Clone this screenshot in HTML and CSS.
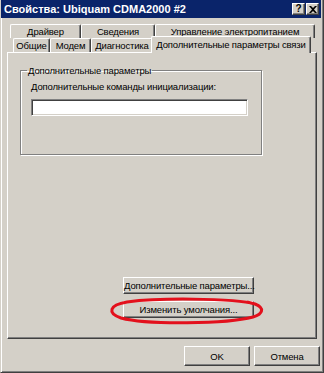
FILE: index.html
```html
<!DOCTYPE html>
<html lang="ru">
<head>
<meta charset="UTF-8">
<title>Свойства: Ubiquam CDMA2000 #2</title>
<link rel="stylesheet" href="styles.css">
</head>
<body>
<div class="window">
    <div class="titlebar">
        <span class="title">Свойства: Ubiquam CDMA2000 #2</span>
        <div class="caption-btns">
            <span class="cap-btn help">?</span>
            <span class="cap-btn close">
                <svg width="8" height="7" viewBox="0 0 8 7"><path d="M0 0h2l2 2 2-2h2L5 3.5 8 7H6L4 5 2 7H0l3-3.5z" fill="#000"/></svg>
            </span>
        </div>
    </div>

    <div class="tabs">
        <div class="tab-row back">
            <div class="tab w-driver">Драйвер</div>
            <div class="tab w-info">Сведения</div>
            <div class="tab w-power">Управление электропитанием</div>
        </div>
        <div class="tab-row front">
            <div class="tab w-general">Общие</div>
            <div class="tab w-modem">Модем</div>
            <div class="tab w-diag">Диагностика</div>
            <div class="tab active w-extra">Дополнительные параметры связи</div>
        </div>
    </div>

    <div class="panel">
        <fieldset class="group">
            <legend>Дополнительные параметры</legend>
            <label for="initcmd">Дополнительные команды инициализации:</label>
            <input type="text" id="initcmd" class="textbox">
        </fieldset>

        <div class="panel-buttons">
            <button class="btn wide">Дополнительные параметры...</button>
            <button class="btn wide">Изменить умолчания...</button>
        </div>

        <!-- red marker round the second button -->
        <svg class="mark" width="160" height="30" viewBox="0 0 160 30">
            <path d="M150 9 C 140 3, 60 1, 20 6 C 2 9, 0 17, 14 22 C 40 29, 120 28, 146 21 C 156 18, 158 12, 148 8 L 140 6" fill="none" stroke="#e3101c" stroke-width="3"/>
        </svg>
    </div>

    <div class="dialog-buttons">
        <button class="btn ok">OK</button>
        <button class="btn cancel">Отмена</button>
    </div>
</div>
</body>
</html>
```

FILE: styles.css
```css
body {
    margin: 0;
    padding: 0;
    background: #d4d0c8;
    font-family: "Liberation Sans", Arial, sans-serif;
    font-size: 9.5px;
    letter-spacing: -0.15px;
    color: #000;
}

.window {
    width: 324px;
    height: 373px;
    box-sizing: border-box;
    background: #d4d0c8;
    border-left: 1px solid #d4d0c8;
    border-right: 1px solid #404040;
    border-bottom: 1px solid #404040;
    box-shadow: inset 1px 0 #fff, inset -1px -1px #808080;
    padding: 0 2px 0 0;
    position: relative;
}

.titlebar {
    height: 18px;
    background: #0a246a;
    display: flex;
    align-items: center;
    justify-content: space-between;
    padding: 0 2px 0 3px;
}

.title {
    color: #fff;
    font-weight: bold;
    font-size: 11px;
    letter-spacing: 0;
}

.caption-btns {
    display: flex;
    gap: 1px;
}

.cap-btn {
    width: 13px;
    height: 12px;
    box-sizing: border-box;
    background: #d4d0c8;
    border: 1px solid;
    border-color: #fff #404040 #404040 #fff;
    box-shadow: inset -1px -1px #808080;
    display: flex;
    align-items: center;
    justify-content: center;
    font-weight: bold;
    font-size: 10px;
    line-height: 1;
}

.tabs {
    margin-top: 6px;
}

.tab-row {
    display: flex;
    height: 14px;
}

.tab-row.back {
    margin-left: 9px;
}

.tab-row.front {
    margin-left: 12px;
}

.tab {
    box-sizing: border-box;
    height: 14px;
    border-top: 1px solid #fff;
    border-left: 1px solid #fff;
    border-right: 1px solid #404040;
    box-shadow: inset -1px 0 #808080;
    border-radius: 2px 2px 0 0;
    text-align: center;
    line-height: 13px;
    white-space: nowrap;
}

.tab.active {
    height: 17px;
    margin-top: -2px;
    margin-left: -2px;
    background: #d4d0c8;
    line-height: 15px;
    position: relative;
    z-index: 1;
}

.w-driver { width: 71px; }
.w-info { width: 74px; }
.w-power { width: 160px; }
.w-general { width: 37px; }
.w-modem { width: 41px; }
.w-diag { width: 62px; }
.w-extra { width: 160px; }

.panel {
    margin-left: 6px;
    width: 310px;
    height: 287px;
    box-sizing: border-box;
    border: 1px solid;
    border-color: #fff #404040 #404040 #fff;
    box-shadow: inset -1px -1px #808080;
    position: relative;
    padding: 0 0 0 12px;
}

.group {
    margin: 12px 0 0 0;
    width: 242px;
    height: 90px;
    box-sizing: border-box;
    padding: 5px 0 0 10px;
    border: 1px solid #808080;
    box-shadow: 1px 1px #fff, inset 1px 1px #fff;
}

.group legend {
    padding: 0 1px;
    margin-left: -4px;
    line-height: 11px;
}

.group label {
    display: block;
    line-height: 12px;
    margin-bottom: 6px;
}

.textbox {
    width: 217px;
    height: 17px;
    box-sizing: border-box;
    border: 1px solid;
    border-color: #808080 #fff #fff #808080;
    box-shadow: inset 1px 1px #404040, inset -1px -1px #d4d0c8;
    background: #fff;
    padding: 0;
    margin: 0;
}

.btn {
    box-sizing: border-box;
    background: #d4d0c8;
    border: 1px solid;
    border-color: #fff #404040 #404040 #fff;
    box-shadow: inset -1px -1px #808080;
    font-family: inherit;
    font-size: 9.5px;
    letter-spacing: -0.15px;
    color: #000;
    padding: 0;
    white-space: nowrap;
}

.panel-buttons {
    margin: 122px 0 0 103px;
    display: flex;
    flex-direction: column;
    gap: 7px;
}

.btn.wide {
    width: 131px;
    height: 17px;
}

.mark {
    position: absolute;
    left: 99px;
    top: 243px;
}

.dialog-buttons {
    display: flex;
    justify-content: flex-end;
    gap: 4px;
    margin-top: 7px;
    padding-right: 1px;
}

.btn.ok,
.btn.cancel {
    width: 66px;
    height: 20px;
}
```
